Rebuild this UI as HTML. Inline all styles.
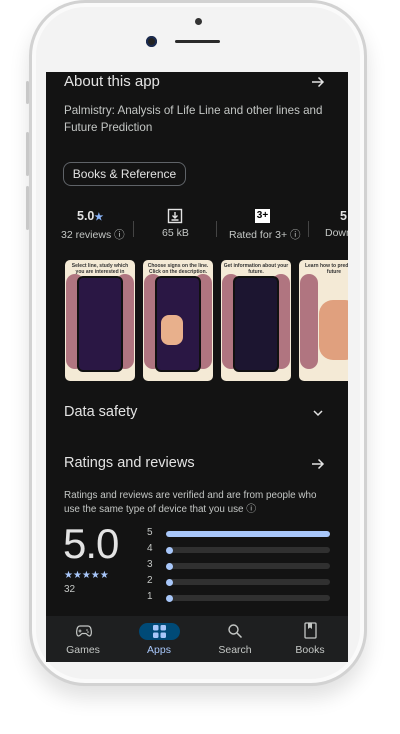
<!DOCTYPE html>
<html><head><meta charset="utf-8"><style>
*{margin:0;padding:0;box-sizing:border-box}
body{width:400px;height:734px;background:#fff;position:relative;overflow:hidden;font-family:"Liberation Sans",sans-serif}
.phone{position:absolute;left:29px;top:0;width:338px;height:686px;border-radius:56px;background:#f3f3f3;border:3px solid #d2d2d2;box-shadow:0 12px 20px rgba(0,0,0,.12),inset 0 0 0 4px #fafafa}
.btn{position:absolute;left:26px;width:3px;background:#c8c8c8;border-radius:2px}
.screen{position:absolute;left:46px;top:72px;width:302px;height:590px;background:#131313;overflow:hidden;color:#e3e3e3}
.t{position:absolute;white-space:nowrap}
.h{font-size:15px;color:#e3e3e3}
.sub{font-size:11.6px;color:#c4c7c5;line-height:17px}
.card{position:absolute;top:188px;width:70px;height:121px;border-radius:5px;background:#f4ead6;overflow:hidden}
.card .ph{position:absolute;left:14px;top:18px;width:42px;height:92px;border-radius:4px;background:#2a1744;box-shadow:0 0 0 2px #111}
.card .hl{position:absolute;top:14px;width:18px;height:95px;background:#b07580;border-radius:9px}
.card .cap{position:absolute;top:3px;left:2px;right:2px;font-size:5px;color:#333;text-align:center;font-weight:bold}
.bar{position:absolute;left:120px;width:164px;height:6px;border-radius:3px;background:#303030}
.bar i{position:absolute;left:0;top:-0.5px;width:7px;height:7px;border-radius:50%;background:#a8c7fa}
.bl{position:absolute;left:101px;font-size:10px;color:#c4c7c5}
.nav{position:absolute;left:0;top:544px;width:302px;height:46px;background:#1e1f20}
.nl{position:absolute;top:28px;font-size:10.5px;color:#c4c7c5;text-align:center;width:60px}
</style></head><body>
<div class="phone"></div>
<div class="btn" style="top:81px;height:23px"></div>
<div class="btn" style="top:132px;height:44px"></div>
<div class="btn" style="top:186px;height:44px"></div>
<div style="position:absolute;left:195px;top:18px;width:7px;height:7px;border-radius:50%;background:#333"></div>
<div style="position:absolute;left:146px;top:36px;width:11px;height:11px;border-radius:50%;background:#222;box-shadow:inset 0 0 0 2px #1a2a50"></div>
<div style="position:absolute;left:175px;top:40px;width:45px;height:3px;border-radius:2px;background:#2a2a2a"></div>
<div class="screen">
 <div class="t h" style="left:18px;top:1px;font-size:15px">About this app</div>
 <svg class="t" style="left:264px;top:2px" width="16" height="16" viewBox="0 0 16 16"><path d="M2 8h11M8.5 3.5L13 8l-4.5 4.5" stroke="#e3e3e3" stroke-width="1.5" fill="none"/></svg>
 <div class="t sub" style="left:18px;top:30px">Palmistry: Analysis of Life Line and other lines and<br>Future Prediction</div>
 <div class="t" style="left:17px;top:90px;width:123px;height:24px;border:1px solid #5f6368;border-radius:8px;font-size:12px;color:#e3e3e3;text-align:center;line-height:22px">Books &amp; Reference</div>
 <div class="t" style="left:31px;top:137px;font-size:12.5px;font-weight:bold">5.0<span style="color:#8ab4f8;font-size:10px">★</span></div>
 <div class="t" style="left:15px;top:155px;font-size:10.5px;color:#c4c7c5">32 reviews ⓘ</div>
 <div class="t" style="left:87px;top:149px;width:1px;height:16px;background:#444"></div>
 <svg class="t" style="left:121px;top:136px" width="16" height="16" viewBox="0 0 16 16"><rect x="1.5" y="1.5" width="13" height="13" fill="none" stroke="#e3e3e3" stroke-width="1.4"/><path d="M8 4v6M5.5 7.5L8 10l2.5-2.5M4.5 12h7" stroke="#e3e3e3" stroke-width="1.4" fill="none"/></svg>
 <div class="t" style="left:116px;top:155px;font-size:10.5px;color:#c4c7c5">65 kB</div>
 <div class="t" style="left:170px;top:149px;width:1px;height:16px;background:#444"></div>
 <div class="t" style="left:209px;top:137px;width:15px;height:14px;background:#fff;color:#000;font-size:10px;font-weight:bold;text-align:center;line-height:14px">3+</div>
 <div class="t" style="left:183px;top:155px;font-size:10.5px;color:#c4c7c5">Rated for 3+ ⓘ</div>
 <div class="t" style="left:262px;top:149px;width:1px;height:16px;background:#444"></div>
 <div class="t" style="left:294px;top:137px;font-size:12.5px;font-weight:bold">5</div>
 <div class="t" style="left:279px;top:155px;font-size:10.5px;color:#c4c7c5">Down</div>

 <div class="card" style="left:19px"><div class="hl" style="left:1px"></div><div class="hl" style="left:51px"></div><div class="ph"></div><div class="cap">Select line, study which you are interested in</div></div>
 <div class="card" style="left:97px"><div class="hl" style="left:1px"></div><div class="hl" style="left:51px"></div><div class="ph"></div><div style="position:absolute;left:18px;top:55px;width:22px;height:30px;border-radius:8px;background:#e8b08c"></div><div class="cap">Choose signs on the line. Click on the description.</div></div>
 <div class="card" style="left:175px"><div class="hl" style="left:1px"></div><div class="hl" style="left:51px"></div><div class="ph" style="background:#1c1530"></div><div class="cap">Get information about your future.</div></div>
 <div class="card" style="left:253px"><div class="hl" style="left:1px"></div><div class="hl" style="left:51px"></div><div style="position:absolute;left:20px;top:40px;width:40px;height:60px;border-radius:14px;background:#e0a07e"></div><div class="cap">Learn how to predict the future</div></div>

 <div class="t h" style="left:18px;top:332px;font-size:14.5px">Data safety</div>
 <svg class="t" style="left:266px;top:336px" width="12" height="10" viewBox="0 0 12 10"><path d="M2 3l4 4 4-4" stroke="#e3e3e3" stroke-width="1.5" fill="none"/></svg>
 <div class="t h" style="left:18px;top:383px;font-size:14.5px">Ratings and reviews</div>
 <svg class="t" style="left:264px;top:384px" width="16" height="16" viewBox="0 0 16 16"><path d="M2 8h11M8.5 3.5L13 8l-4.5 4.5" stroke="#e3e3e3" stroke-width="1.5" fill="none"/></svg>
 <div class="t" style="left:18px;top:417px;font-size:9.9px;color:#c4c7c5;line-height:14px">Ratings and reviews are verified and are from people who<br>use the same type of device that you use ⓘ</div>
 <div class="t" style="left:17px;top:448px;font-size:42px;color:#e3e3e3;letter-spacing:-1px">5.0</div>
 <div class="t" style="left:18px;top:498px;font-size:10px;color:#a8c7fa">★★★★★</div>
 <div class="t" style="left:18px;top:512px;font-size:10px;color:#c4c7c5">32</div>
 <div class="bl" style="top:455px">5</div><div class="bar" style="top:459px;background:#a8c7fa"></div>
 <div class="bl" style="top:471px">4</div><div class="bar" style="top:475px"><i></i></div>
 <div class="bl" style="top:487px">3</div><div class="bar" style="top:491px"><i></i></div>
 <div class="bl" style="top:503px">2</div><div class="bar" style="top:507px"><i></i></div>
 <div class="bl" style="top:519px">1</div><div class="bar" style="top:523px"><i></i></div>

 <div class="nav">
  <svg class="t" style="left:30px;top:8px" width="16" height="14" viewBox="0 0 16 14"><path d="M4 2h8c2 0 3 2 3.3 5s-.5 5-2 5-2.5-2.5-3.5-2.5h-3.6C5.2 9.5 4.2 12 2.7 12S.4 10 .7 7 2 2 4 2z" fill="none" stroke="#c4c7c5" stroke-width="1.2"/><path d="M4 5.5v3M2.5 7h3" stroke="#c4c7c5" stroke-width="1.1"/><circle cx="11" cy="6" r=".8" fill="#c4c7c5"/><circle cx="12" cy="8" r=".8" fill="#c4c7c5"/></svg>
  <div class="nl" style="left:7px">Games</div>
  <div class="t" style="left:93px;top:7px;width:41px;height:17px;border-radius:9px;background:#004a77"></div>
  <svg class="t" style="left:107px;top:9px" width="13" height="13" viewBox="0 0 13 13" fill="#a8c7fa"><rect x="0" y="0" width="5.5" height="5.5" rx="1.2"/><rect x="7.5" y="0" width="5.5" height="5.5" rx="1.2"/><rect x="0" y="7.5" width="5.5" height="5.5" rx="1.2"/><rect x="7.5" y="7.5" width="5.5" height="5.5" rx="1.2"/></svg>
  <div class="nl" style="left:83px;color:#a8c7fa">Apps</div>
  <svg class="t" style="left:181px;top:7px" width="16" height="16" viewBox="0 0 16 16"><circle cx="6.5" cy="6.5" r="4.5" fill="none" stroke="#c4c7c5" stroke-width="1.4"/><path d="M10 10l4.5 4.5" stroke="#c4c7c5" stroke-width="1.5"/></svg>
  <div class="nl" style="left:159px">Search</div>
  <svg class="t" style="left:258px;top:6px" width="13" height="17" viewBox="0 0 13 17"><rect x="1" y="1" width="11" height="15" rx="1" fill="none" stroke="#c4c7c5" stroke-width="1.3"/><path d="M4 1v6l2-1.5L8 7V1" fill="#c4c7c5"/></svg>
  <div class="nl" style="left:234px">Books</div>
 </div>
</div>
</body></html>
